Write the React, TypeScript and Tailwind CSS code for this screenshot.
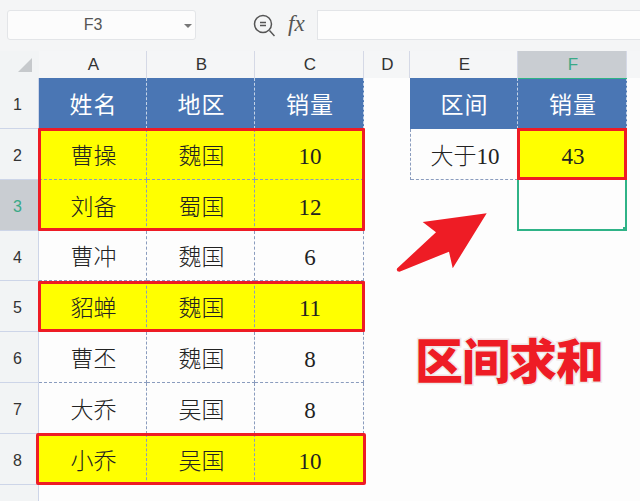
const sheetFont = "font-['Liberation_Serif','Noto_Sans_CJK_SC',serif]"
const uiFont = "font-['Liberation_Sans','Noto_Sans_CJK_SC',sans-serif]"
const dashed = "border-r border-b border-dashed border-[#8a9cbe]"

const columns = ["A", "B", "C", "D", "E", "F"]

const rows = [
  { num: 2, cells: ["曹操", "魏国", "10"], fill: true },
  { num: 3, cells: ["刘备", "蜀国", "12"], fill: true },
  { num: 4, cells: ["曹冲", "魏国", "6"], fill: false },
  { num: 5, cells: ["貂蝉", "魏国", "11"], fill: true },
  { num: 6, cells: ["曹丕", "魏国", "8"], fill: false },
  { num: 7, cells: ["大乔", "吴国", "8"], fill: false },
  { num: 8, cells: ["小乔", "吴国", "10"], fill: true },
]

function HeaderCell({ text }: { text: string }) {
  return (
    <div className={`flex items-center justify-center bg-[#4a76b4] pl-[2px] pt-[6px] text-[23px] tracking-[1px] text-white border-r border-dashed border-[#c3d2e6] ${sheetFont}`}>
      {text}
    </div>
  )
}

function Cell({ text, fill }: { text: string; fill: boolean }) {
  return (
    <div className={`flex items-center justify-center pl-[2px] pt-[6px] text-[23px] font-light text-[#222] ${dashed} ${sheetFont} ${fill ? "bg-[#ffff00]" : "bg-[#fdfdfd]"}`}>
      {text}
    </div>
  )
}

function Toolbar() {
  return (
    <div className="flex h-[51px] items-start bg-[#f4f5f6] pt-[10px]">
      <div className={`relative ml-[7px] flex h-[30px] w-[189px] items-center justify-center rounded-[3px] border border-[#e3e5e8] bg-[#fcfcfc] pr-[17px] text-[16px] text-[#555] ${uiFont}`}>
        F3
        <span className="absolute right-[3px] top-[13px] h-0 w-0 border-x-[4px] border-t-[4px] border-x-transparent border-t-[#777]" />
      </div>
      <svg className="ml-[57px] mt-[3px]" width="22" height="24" viewBox="0 0 22 24" fill="none" stroke="#555" strokeWidth="1.5">
        <circle cx="10" cy="11" r="8.5" />
        <path d="M16.5 17.5L21.5 23M7 9.5h6M7 12.5h6" />
      </svg>
      <span className="ml-[13px] mt-[-1px] font-['Liberation_Serif',serif] text-[23px] italic leading-[30px] text-[#555]">fx</span>
      <div className="ml-[12px] h-[30px] flex-1 border border-r-0 border-[#e3e5e8] bg-[#fdfdfd]" />
    </div>
  )
}

export default function App() {
  return (
    <div className="relative h-[501px] w-[640px] overflow-hidden bg-[#fdfdfd]">
      <Toolbar />

      <div className="grid grid-cols-[39px_108px_108px_109px_46px_108px_109px_13px] grid-rows-[27px_51px_51px_51px_50px_51px_51px_51px_51px_16px]">
        {/* column headers */}
        <div className="col-start-1 row-start-1 flex items-end justify-end bg-[#f2f4f5] pb-[6px] pr-[7px]">
          <svg width="14" height="14" viewBox="0 0 14 14"><path d="M14 0V14H0Z" fill="#c6c9cc" /></svg>
        </div>
        {columns.map((c, i) => (
          <div
            key={c}
            style={{ gridColumnStart: i + 2 }}
            className={`row-start-1 flex items-center justify-center border-r border-[#d5d9e6] pl-[2px] text-[17px] ${uiFont} ${c === "F" ? "bg-[#c9cdd2] text-[#39a987]" : "bg-[#f5f6f7] text-[#333]"}`}
          >
            {c}
          </div>
        ))}
        <div className="col-start-8 row-start-1 bg-[#f5f6f7]" />

        {/* row headers */}
        {[1, 2, 3, 4, 5, 6, 7, 8].map((n) => (
          <div
            key={n}
            style={{ gridRowStart: n + 1 }}
            className={`col-start-1 flex items-center justify-center border-b border-r border-[#cdd5e8] pr-[3px] pt-[4px] text-[16px] ${uiFont} ${n === 3 ? "bg-[#c9cdd2] text-[#39a987]" : "bg-[#f2f4f5] text-[#333]"}`}
          >
            {n}
          </div>
        ))}
        <div className="col-start-1 row-start-10 border-r border-[#cdd5e8] bg-[#f2f4f5]" />

        {/* left table */}
        <div className="col-start-2 row-start-2 contents">
          <HeaderCell text="姓名" />
          <HeaderCell text="地区" />
          <HeaderCell text="销量" />
        </div>
        {rows.map((r) => (
          <div key={r.num} className="contents">
            {r.cells.map((t, i) => (
              <div key={i} style={{ gridRowStart: r.num + 1, gridColumnStart: i + 2 }} className="grid">
                <Cell text={t} fill={r.fill} />
              </div>
            ))}
          </div>
        ))}

        {/* right table */}
        <div className="col-start-6 row-start-2 grid"><HeaderCell text="区间" /></div>
        <div className="col-start-7 row-start-2 grid"><HeaderCell text="销量" /></div>
        <div className="col-start-6 row-start-3 grid border-l border-dashed border-[#8a9cbe]"><Cell text="大于10" fill={false} /></div>
        <div className="col-start-7 row-start-3 grid"><Cell text="43" fill={true} /></div>

        {/* red outlines */}
        <div className="col-start-2 col-end-5 row-start-3 row-end-5 z-10 -mx-[1px] -mt-[1px] rounded-[1px] border-[3px] border-[#ee1c25]" />
        <div className="col-start-2 col-end-5 row-start-6 row-end-7 z-10 -mx-[1px] rounded-[1px] border-[3px] border-[#ee1c25]" />
        <div className="col-start-2 col-end-5 row-start-9 row-end-10 z-10 -ml-[3px] -mr-[2px] -mt-[1px] rounded-[2px] border-[3px] border-[#ee1c25]" />
        <div className="col-start-7 col-end-8 row-start-3 row-end-4 z-10 -ml-[1px] -mt-[1px] border-[3px] border-[#ee1c25]" />

        {/* active cell */}
        <div className="relative col-start-7 col-end-8 row-start-4 row-end-5 z-10 -ml-[1px] border-2 border-t-0 border-[#2fb387]">
          <span className="absolute -bottom-[2px] -right-[2px] h-[4px] w-[4px] bg-[#2fb387]" />
        </div>
        <div className="col-start-7 col-end-8 row-start-2 z-10 h-[1px] bg-[#2fb387]" />
      </div>

      {/* arrow and caption lie over the sheet */}
      <svg className="absolute left-0 top-0" width="640" height="501" viewBox="0 0 640 501">
        <path d="M486.7 213.3L422.7 222L436 232.3L397 268.5Q396 271.5 399.5 271.7L449 251.7L452.7 268.3Z" fill="#ee1c25" />
      </svg>
      <div className="absolute left-[415px] top-[326px] text-[48px] font-black leading-[64px] tracking-[-1px] text-[#ee1c25] [-webkit-text-stroke:3px_#efe8e8] [paint-order:stroke_fill] font-['Noto_Sans_CJK_SC',sans-serif]">
        区间求和
      </div>
    </div>
  )
}
